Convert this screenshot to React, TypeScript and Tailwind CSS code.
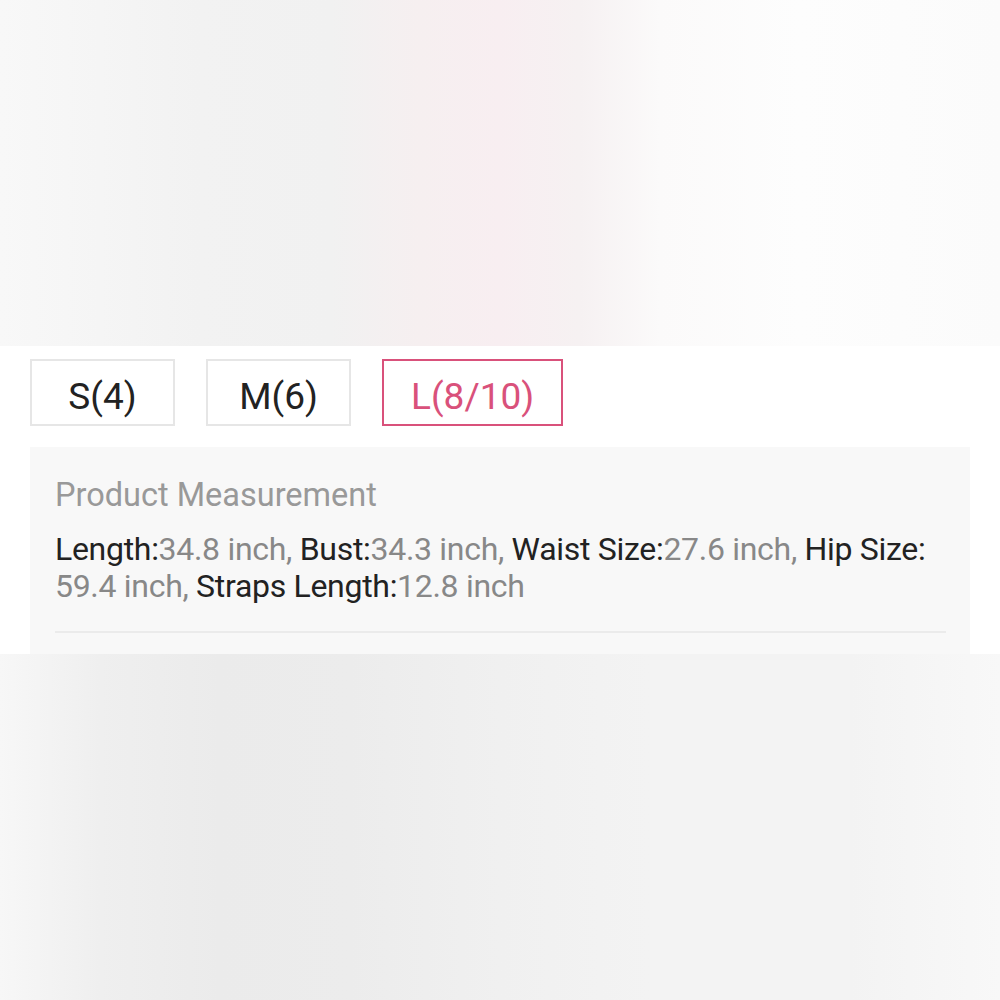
import React from "react";

const font = { fontFamily: "Roboto, 'Noto Sans', sans-serif" };

function SizeBtn({ label, active }: { label: string; active?: boolean }) {
  return (
    <div
      className={
        active
          ? "h-[67px] px-[27px] pt-[9px] border-2 border-[#d9517b] text-[#d9517b] flex items-center justify-center text-[37px]"
          : "h-[67px] w-[145px] pt-[9px] border-2 border-[#e6e6e6] text-[#222] flex items-center justify-center text-[37px]"
      }
    >
      {label}
    </div>
  );
}

export default function App() {
  return (
    <div className="w-[1000px] h-[1000px] flex flex-col overflow-hidden" style={font}>
      <div className="h-[346px] bg-[linear-gradient(90deg,#f8f8f8_0%,#f2f2f2_20%,#f1f1f1_33%,#f6eff0_42%,#f8eef1_50%,#f6f1f2_58%,#fbfafa_66%,#fdfdfd_80%,#fbfbfb_100%)]" />
      <div className="h-[308px] bg-white flex flex-col">
        <div className="flex gap-[31px] pl-[30px] pt-[13px]">
          <SizeBtn label="S(4)" />
          <SizeBtn label="M(6)" />
          <SizeBtn label="L(8/10)" active />
        </div>
        <div className="mt-[21px] ml-[30px] w-[940px] flex-1 bg-[#f8f8f8] pl-[25px] pr-[24px] pt-[30px]">
          <div className="text-[32.5px] leading-[36px] text-[#999]">Product Measurement</div>
          <div className="mt-[18px] text-[32px] leading-[37px] text-[#222] tracking-[-0.3px]">
            Length:<span className="text-[#888]">34.8 inch, </span>Bust:
            <span className="text-[#888]">34.3 inch, </span>Waist Size:
            <span className="text-[#888]">27.6 inch, </span>Hip Size:
            <span className="text-[#888]"> 59.4 inch, </span>Straps Length:
            <span className="text-[#888]">12.8 inch</span>
          </div>
          <div className="mt-[26px] h-[2px] bg-[#ebebeb]" />
        </div>
      </div>
      <div className="flex-1 bg-[linear-gradient(90deg,#f7f7f7_0%,#efefef_10%,#ebebeb_22%,#ececec_35%,#f0f0f0_50%,#f3f3f3_65%,#f3f3f3_85%,#f8f8f8_100%)]" />
    </div>
  );
}
